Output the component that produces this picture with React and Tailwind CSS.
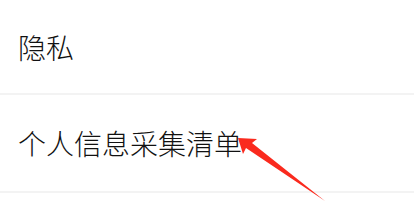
export default function App() {
  return (
    <div className="relative w-[414px] h-[221px] bg-white overflow-hidden" style={{ fontFamily: '"Noto Sans CJK SC", "Noto Sans", sans-serif' }}>
      <div className="h-[93px] flex items-center pl-[18px] text-[28px] font-light text-[#111111] leading-none">隐私</div>
      <div className="h-[2px] bg-[#f3f3f3]"></div>
      <div className="h-[96px] flex items-center pl-[18px] text-[28px] font-light text-[#111111] leading-none">个人信息采集清单</div>
      <div className="h-[2px] bg-[#f3f3f3]"></div>
      <svg className="absolute left-0 top-0" width="414" height="221" viewBox="0 0 414 221">
        <polygon points="238,138 257,139 252,143 325,201 246,148 243,154" fill="#fa2a1e" />
      </svg>
    </div>
  );
}
